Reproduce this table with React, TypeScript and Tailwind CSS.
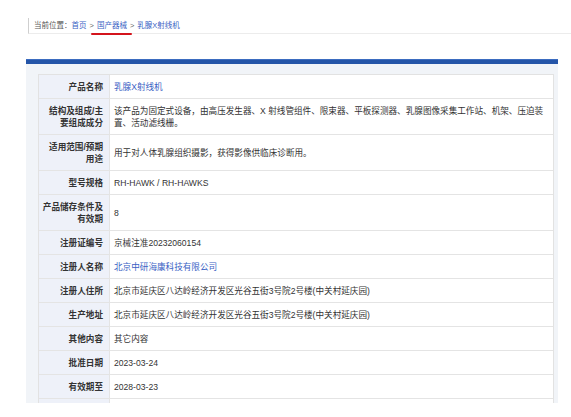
import React from 'react';

type Row = {
  label: React.ReactNode;
  value: React.ReactNode;
  link?: boolean;
};

const rows: Row[] = [
  { label: '产品名称', value: '乳腺X射线机', link: true },
  {
    label: (
      <>
        结构及组成/主
        <br />
        要组成成分
      </>
    ),
    value: (
      <>
        该产品为固定式设备，由高压发生器、X 射线管组件、限束器、平板探测器、乳腺图像采集工作站、机架、压迫装
        <br />
        置、活动滤线栅。
      </>
    ),
  },
  {
    label: (
      <>
        适用范围/预期
        <br />
        用途
      </>
    ),
    value: '用于对人体乳腺组织摄影，获得影像供临床诊断用。',
  },
  { label: '型号规格', value: 'RH-HAWK / RH-HAWKS' },
  {
    label: (
      <>
        产品储存条件及
        <br />
        有效期
      </>
    ),
    value: '8',
  },
  { label: '注册证编号', value: '京械注准20232060154' },
  { label: '注册人名称', value: '北京中研海康科技有限公司', link: true },
  { label: '注册人住所', value: '北京市延庆区八达岭经济开发区光谷五街3号院2号楼(中关村延庆园)' },
  { label: '生产地址', value: '北京市延庆区八达岭经济开发区光谷五街3号院2号楼(中关村延庆园)' },
  { label: '其他内容', value: '其它内容' },
  { label: '批准日期', value: '2023-03-24' },
  { label: '有效期至', value: '2028-03-23' },
  { label: '', value: '' },
];

export default function App() {
  return (
    <div
      className="w-[571px] h-[417px] bg-white overflow-hidden text-[8.6px] text-[#333]"
      style={{ fontFamily: '"Liberation Sans", "Noto Sans CJK SC", sans-serif' }}
    >
      {/* breadcrumb */}
      <div className="pt-[18px] pl-[28px]">
        <div className="h-[16px] border-l border-b border-l-[#cfcfcf] border-b-[#ececec] pl-[5px] flex items-center gap-[3px] text-[7.5px] leading-[12px] whitespace-nowrap">
          <span className="text-[#555] -mr-[3px]">当前位置：</span>
          <span className="text-[#3a62c4]">首页</span>
          <span className="text-[#666]">&gt;</span>
          <span className="relative text-[#3a62c4]">
            国产器械
            <span className="absolute left-[-6px] top-[13px] w-[41px] h-[2px] rounded-full bg-[#d4141c]" />
          </span>
          <span className="text-[#666]">&gt;</span>
          <span className="text-[#3a62c4]">乳腺X射线机</span>
        </div>
      </div>

      {/* content panel */}
      <div className="mt-[25px] ml-[26px] w-[532px]">
        <div className="h-[5px] bg-[#2455a8] border-t border-t-[#3b6cc0]" />
        <div className="h-[339px] overflow-hidden bg-[#f1f4f8] pl-[12px] pr-[4px] pt-[10px]">
          <div className="bg-white border border-[#e2e2e2]">
            {rows.map((r, i) => (
              <div key={i} className={`flex ${i > 0 ? 'border-t border-t-[#e4e4e4]' : ''}`}>
                <div className="w-[71px] shrink-0 bg-[#eef1f9] border-r border-r-[#e4e4e4] text-right font-bold pr-[6px] py-[5.5px] leading-[12px] whitespace-nowrap min-h-[23px]">
                  {r.label}
                </div>
                <div
                  className={`flex-1 flex items-center pl-[4px] py-[5.5px] leading-[12px] whitespace-nowrap ${
                    r.link ? 'text-[#3a62c4]' : 'text-[#333]'
                  }`}
                >
                  <div>{r.value}</div>
                </div>
              </div>
            ))}
          </div>
        </div>
      </div>
    </div>
  );
}
